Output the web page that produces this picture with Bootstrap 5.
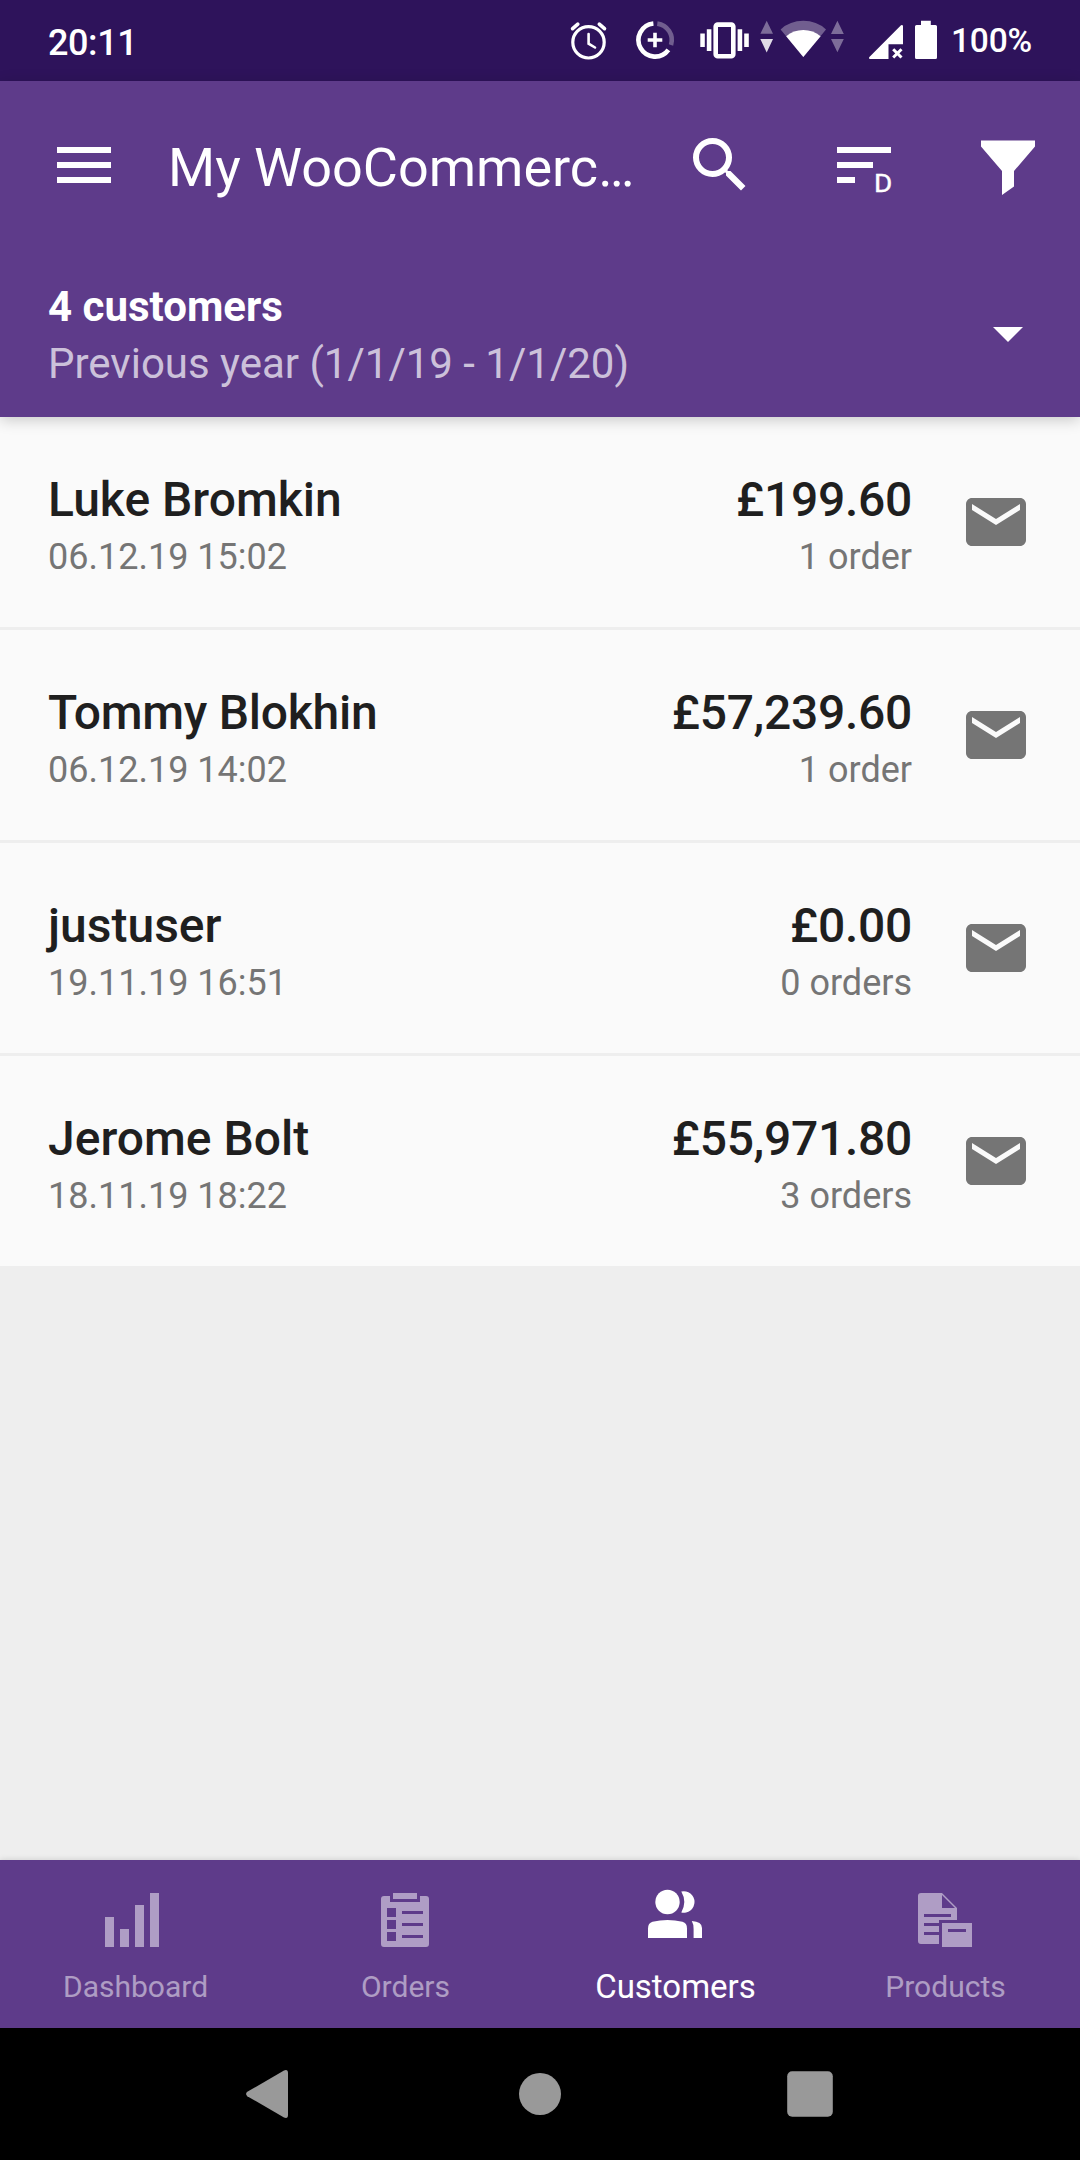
<!DOCTYPE html>
<html lang="en">
<head>
<meta charset="utf-8">
<meta name="viewport" content="width=device-width, initial-scale=1">
<title>Customers</title>
<link href="https://cdn.jsdelivr.net/npm/bootstrap@5.3.0/dist/css/bootstrap.min.css" rel="stylesheet">
<style>
  :root { --brand: #5e3b8a; --brand-dark: #2e135b; }
  body { font-family: Roboto, sans-serif; background: #eee; }
  svg { display: block; flex: none; }
  .screen { width: 1080px; height: 2160px; }
  .fw-mid { font-weight: 500; }
  .statusbar { height: 81px; background: var(--brand-dark); padding: 0 48px; }
  .clock { font-size: 36px; line-height: 42px; padding-top: 4px; letter-spacing: -.4px; }
  .battery-text { font-size: 33.5px; line-height: 42px; width: 81px; margin-left: -1px; letter-spacing: -.2px; }
  .brandbar { background: var(--brand); z-index: 1; }
  .topbar-shadow { box-shadow: 0 3px 14px rgba(0,0,0,.2); }
  .toolbar { height: 168px; padding: 0 36px 0 48px; }
  .toolbar-title { font-size: 54px; line-height: 64px; width: 468px; margin-left: 48px; padding-top: 5px; }
  .toolbar-actions { gap: 72px; }
  .summary { height: 168px; padding: 29px 36px 25px 48px; font-size: 42px; line-height: 57px; }
  .period { color: rgba(255,255,255,.7); }
  .customer { height: 213px; padding: 0 48px; background: #fafafa; border: 0; border-bottom: 3px solid #eee !important; }
  .customer:last-child { height: 210px; border-bottom: 0 !important; }
  .entry { padding-top: 10px; }
  .person, .amount { font-size: 48px; line-height: 60px; color: #1f1f1f; font-weight: 500; }
  .person-tight { letter-spacing: -.25px; }
  .amount { letter-spacing: -.3px; }
  .detail { font-size: 36px; line-height: 54px; color: #757575; }
  .bottomnav { height: 168px; box-shadow: 0 0 6px rgba(0,0,0,.15); }
  .bottomnav .nav-link { color: rgba(255,255,255,.5); font-size: 30px; line-height: 36px; padding: 24px 0 0; height: 168px; }
  .bottomnav .nav-link span { margin-top: 13px; padding-left: 1px; }
  .bottomnav .nav-link.active { color: #fff; font-size: 33px; padding-top: 18px; }
  .bottomnav .nav-link.active span { margin-top: 19px; }
  .sysnav { height: 132px; padding: 0 135px; background: #000; }
</style>
</head>
<body>
<div class="screen d-flex flex-column overflow-hidden">

  <div class="statusbar d-flex align-items-center justify-content-between text-white">
    <div class="clock fw-mid">20:11</div>
    <div class="d-flex align-items-center">
      <!-- alarm -->
      <svg width="60" height="81" viewBox="564 0 60 81" fill="none" stroke="#fff" stroke-linecap="round">
        <circle cx="588.5" cy="42.3" r="15.7" stroke-width="3.2"/>
        <path d="M588.6 34v9.7l6.4 3.8" stroke-width="2.6"/>
        <path d="M572.6 28.7l5.2-4.6M604.5 28.7l-5.2-4.6" stroke-width="3.6"/>
      </svg>
      <!-- data saver -->
      <svg width="66" height="81" viewBox="624 0 66 81" fill="none" stroke="#fff" stroke-width="4.6">
        <path d="M653.4 23.5A16.6 16.6 0 1 0 668.4 49.9"/>
        <path d="M657.3 23.6A16.6 16.6 0 0 1 671 45" stroke-opacity=".32"/>
        <path d="M647.7 40h14.6M655 32.7v14.6" stroke-width="3.6"/>
      </svg>
      <!-- vibrate -->
      <svg width="64" height="81" viewBox="690 0 64 81" fill="#fff">
        <rect x="715.7" y="24.6" width="17.6" height="31.6" rx="2" fill="none" stroke="#fff" stroke-width="4.6"/>
        <path d="M700.3 33.5h4.5v13.6h-4.5zM706.8 29.3h4.6v21.8h-4.6zM737.6 29.3h4.6v21.8h-4.6zM744.2 33.5h4.6v13.6h-4.6z"/>
      </svg>
      <!-- wifi and traffic arrows -->
      <svg width="104" height="81" viewBox="754 0 104 81" fill="#fff">
        <path d="M766.7 20.7L773 33.8h-12.6z" fill-opacity=".38"/>
        <path d="M760.3 39H773l-6.3 13.6z" fill-opacity=".85"/>
        <path d="M803.3 57L780.6 29.4Q790 20.8 803.3 20.8T826 29.4z" fill-opacity=".32"/>
        <path d="M803.3 57L786.2 36.2Q793.5 30 803.3 30T820.6 36.2z"/>
        <path d="M837.4 20.7l6.4 13.3h-12.8zM831 39h12.8l-6.4 13.2z" fill-opacity=".38"/>
      </svg>
      <!-- mobile signal -->
      <svg width="52" height="81" viewBox="858 0 52 81" fill="#fff">
        <path d="M869.6 59q-1.2-.8-.2-2L901 25.3q1.6-.8 2 .6V44.3H888.5V59z"/>
        <path d="M893.2 49.2l8.3 8.3M901.5 49.2l-8.3 8.3" stroke="#fff" stroke-width="3"/>
      </svg>
      <!-- battery -->
      <svg width="42" height="81" viewBox="910 0 42 81" fill="#fff">
        <path d="M921 20.8h9.8V25H935.5q1.5 0 1.5 1.5V57.5q0 1.5-1.5 1.5H916.5q-1.5 0-1.5-1.5V26.5q0-1.5 1.5-1.5H921z"/>
      </svg>
      <div class="battery-text fw-mid">100%</div>
    </div>
  </div>

  <header class="brandbar topbar-shadow position-relative text-white">
    <div class="toolbar d-flex align-items-center">
      <svg width="72" height="72" viewBox="0 0 24 24" fill="#fff"><path d="M3 18h18v-2H3zM3 13h18v-2H3zM3 6v2h18V6z"/></svg>
      <div class="toolbar-title text-nowrap">My WooCommerc…</div>
      <div class="toolbar-actions d-flex ms-auto">
        <svg width="72" height="72" viewBox="0 0 24 24" fill="#fff"><path d="M15.5 14h-.79l-.28-.27A6.471 6.471 0 0 0 16 9.5 6.5 6.5 0 1 0 9.5 16c1.61 0 3.09-.59 4.23-1.57l.27.28v.79l5 4.99L20.49 19l-4.99-5zm-6 0C7.01 14 5 11.99 5 9.5S7.01 5 9.5 5 14 7.01 14 9.5 11.99 14 9.5 14z"/></svg>
        <svg width="72" height="72" viewBox="0 0 72 72" fill="#fff"><path d="M9 18h54v6H9zM9 33h36v6H9zM9 48h18v6H9z"/><text transform="translate(46 63) scale(1.1 1)" font-size="25.3" font-weight="400" stroke="#fff" stroke-width=".4">D</text></svg>
        <svg width="72" height="72" viewBox="0 0 72 72" fill="#fff"><path d="M9 11.4H63V17.5L42 42V57.5L30 66V42L9 17.5z"/></svg>
      </div>
    </div>
    <div class="summary d-flex align-items-center justify-content-between">
      <div>
        <div class="fw-bold">4 customers</div>
        <div class="period">Previous year (1/1/19 - 1/1/20)</div>
      </div>
      <svg width="72" height="72" viewBox="0 0 24 24" fill="#fff"><path d="M7 9.33l5 5 5-5z"/></svg>
    </div>
  </header>

  <main class="flex-grow-1">
    <svg class="d-none"><symbol id="mail" viewBox="0 0 24 24"><path d="M20 4H4c-1.1 0-1.99.9-1.99 2L2 18c0 1.1.9 2 2 2h16c1.1 0 2-.9 2-2V6c0-1.1-.9-2-2-2zm0 4l-8 5-8-5V6l8 5 8-5v2z"/></symbol></svg>
    <div class="list-group list-group-flush">
      <div class="customer list-group-item d-flex align-items-center">
        <div class="entry me-auto"><div class="person">Luke Bromkin</div><div class="detail">06.12.19 15:02</div></div>
        <div class="entry text-end"><div class="amount">£199.60</div><div class="detail">1 order</div></div>
        <svg class="ms-5" width="72" height="72" fill="#757575"><use href="#mail"/></svg>
      </div>
      <div class="customer list-group-item d-flex align-items-center">
        <div class="entry me-auto"><div class="person person-tight">Tommy Blokhin</div><div class="detail">06.12.19 14:02</div></div>
        <div class="entry text-end"><div class="amount">£57,239.60</div><div class="detail">1 order</div></div>
        <svg class="ms-5" width="72" height="72" fill="#757575"><use href="#mail"/></svg>
      </div>
      <div class="customer list-group-item d-flex align-items-center">
        <div class="entry me-auto"><div class="person">justuser</div><div class="detail">19.11.19 16:51</div></div>
        <div class="entry text-end"><div class="amount">£0.00</div><div class="detail">0 orders</div></div>
        <svg class="ms-5" width="72" height="72" fill="#757575"><use href="#mail"/></svg>
      </div>
      <div class="customer list-group-item d-flex align-items-center">
        <div class="entry me-auto"><div class="person">Jerome Bolt</div><div class="detail">18.11.19 18:22</div></div>
        <div class="entry text-end"><div class="amount">£55,971.80</div><div class="detail">3 orders</div></div>
        <svg class="ms-5" width="72" height="72" fill="#757575"><use href="#mail"/></svg>
      </div>
    </div>
  </main>

  <nav class="bottomnav brandbar nav nav-fill flex-nowrap">
    <a class="nav-link nav-item w-25 d-flex flex-column align-items-center">
      <svg width="72" height="72" fill="currentColor"><path d="M6 33h9v30H6zM21 45h9v18h-9zM36 21h9v42h-9zM51 9h9v54h-9z"/></svg>
      <span>Dashboard</span>
    </a>
    <a class="nav-link nav-item w-25 d-flex flex-column align-items-center">
      <svg width="72" height="72" fill="currentColor" fill-rule="evenodd"><path d="M24 9h24v6H24zM15 12h6v6h30v-6h6q3 0 3 3v45q0 3-3 3H15q-3 0-3-3V15q0-3 3-3zM18 24v9h9v-9zM18 36v9h9v-9zM18 48v9h9v-9zM33 27v3h21v-3zM33 39v3h21v-3zM33 51v3h21v-3z"/></svg>
      <span>Orders</span>
    </a>
    <a class="nav-link nav-item active w-25 d-flex flex-column align-items-center">
      <svg width="72" height="72" fill="currentColor"><circle cx="28.5" cy="24" r="12.2"/><path d="M9 60V50.5Q9 45 13.5 43.7Q28.5 40.5 43.5 43.7Q48 45 48 50.5V60z"/><path d="M42.3 13.6A10.7 10.7 0 1 1 42.3 34.4Q48.3 24 42.3 13.6zM52.8 43Q63 43.6 63 50V60H54.6V51Q54.6 46 52.8 43z"/></svg>
      <span>Customers</span>
    </a>
    <a class="nav-link nav-item w-25 d-flex flex-column align-items-center">
      <svg width="72" height="72" fill="currentColor" fill-rule="evenodd"><path d="M12 9H33L48 24V36H30V39H15V42H30V48H15V51H30V60H12q-3 0-3-3V12q0-3 3-3zM33 11V24H46zM15 30V33H42V30zM33 39H63V63H33zM39 45V48H57V45z"/></svg>
      <span>Products</span>
    </a>
  </nav>

  <div class="sysnav d-flex align-items-center justify-content-around">
    <svg width="72" height="72" fill="#999"><path d="M13.3 33.8L50 12.5Q54 11 54 15V57Q54 61 50 59.5L13.3 38.2Q10.8 36 13.3 33.8z"/></svg>
    <svg width="72" height="72" fill="#999"><circle cx="36" cy="36" r="21"/></svg>
    <svg width="72" height="72" fill="#999"><rect x="13.2" y="13.3" width="45.6" height="45.4" rx="5"/></svg>
  </div>
</div>
<script src="https://cdn.jsdelivr.net/npm/bootstrap@5.3.0/dist/js/bootstrap.bundle.min.js"></script>
</body>
</html>
